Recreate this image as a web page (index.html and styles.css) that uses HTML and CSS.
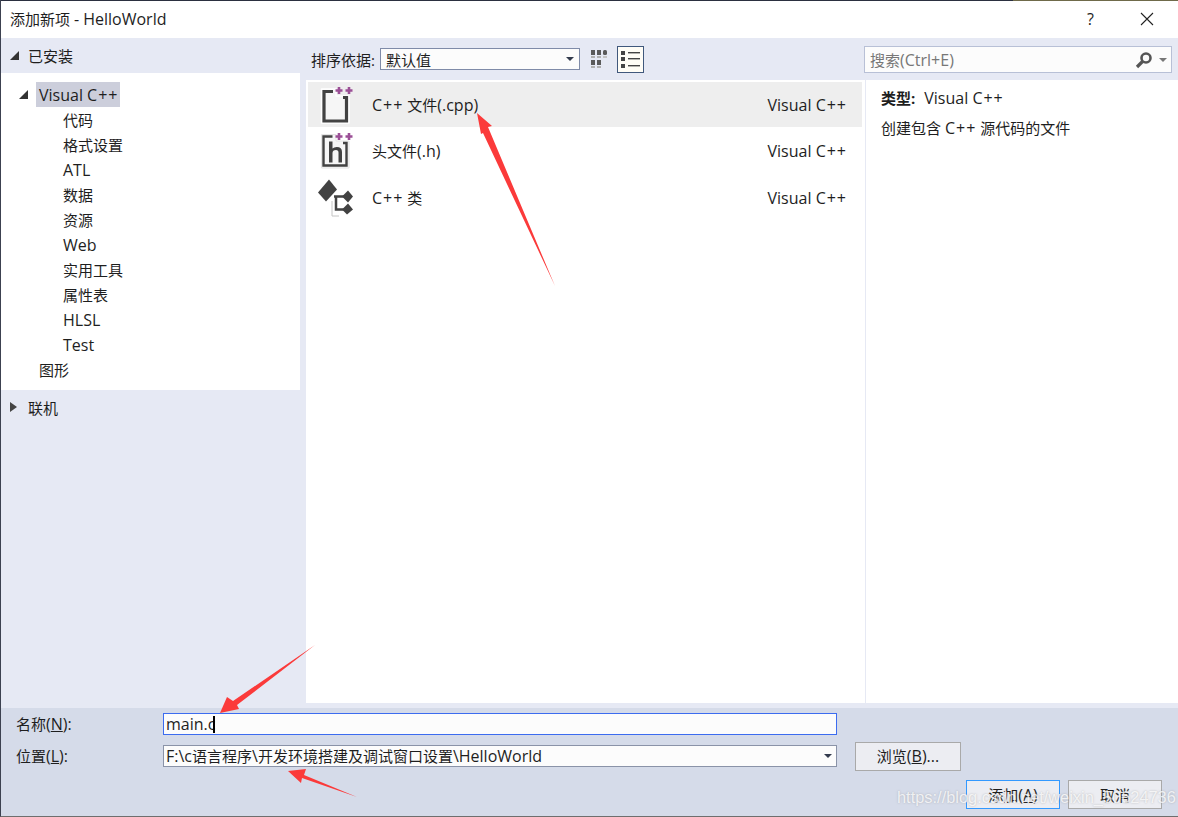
FILE: index.html
```html
<!DOCTYPE html>
<html lang="zh-CN">
<head>
    <meta charset="UTF-8">
    <title>添加新项 - HelloWorld</title>
    <link rel="stylesheet" href="styles.css">
</head>
<body>
<div class="window">
    <div class="top-edge"></div>

    <header class="titlebar">
        <span class="title">添加新项 <span class="en">- HelloWorld</span></span>
        <span class="help">?</span>
        <svg class="close" width="14" height="14" viewBox="0 0 14 14"><path d="M1 1L13 13M13 1L1 13" stroke="#222" stroke-width="1.1" fill="none"/></svg>
    </header>

    <div class="main">
        <!-- left tree -->
        <aside class="sidebar">
            <div class="group-head"><span class="tri-open"></span>已安装</div>
            <ul class="tree">
                <li class="tree-root"><span class="tri-open small"></span><span class="selected en">Visual <span class="cc">C++</span></span></li>
                <li>代码</li>
                <li>格式设置</li>
                <li class="en">ATL</li>
                <li>数据</li>
                <li>资源</li>
                <li class="en">Web</li>
                <li>实用工具</li>
                <li>属性表</li>
                <li class="en">HLSL</li>
                <li class="en">Test</li>
                <li class="tree-top">图形</li>
            </ul>
            <div class="group-head online"><span class="tri-closed"></span>联机</div>
        </aside>

        <!-- template list -->
        <section class="center">
            <div class="toolbar">
                <span class="sort-label">排序依据:</span>
                <div class="combo sort-combo"><span>默认值</span><span class="arrow-down"></span></div>
                <svg class="view-grid" width="18" height="18" viewBox="0 0 18 18" fill="#5a5a5a">
                    <rect x="1" y="0" width="4" height="5"/><rect x="7" y="0" width="4" height="5"/><rect x="13" y="0" width="4" height="5" rx="1.500"/>
                    <rect x="1" y="6" width="4" height="2" fill="#b0b0b0"/><rect x="7" y="6" width="4" height="2" fill="#b0b0b0"/><rect x="13" y="6" width="4" height="2" fill="#c4c4c4"/>
                    <rect x="1" y="10" width="4" height="5"/><rect x="7" y="10" width="4" height="5"/>
                    <rect x="1" y="16" width="4" height="2" fill="#b0b0b0"/><rect x="7" y="16" width="4" height="2" fill="#b0b0b0"/>
                </svg>
                <div class="view-list">
                    <svg width="19" height="17" viewBox="0 0 19 17" fill="#444">
                        <rect x="0" y="0" width="4" height="4"/><rect x="7" y="1" width="12" height="1.400"/>
                        <rect x="0" y="6" width="4" height="4"/><rect x="7" y="7" width="12" height="1.400"/>
                        <rect x="0" y="13" width="4" height="4"/><rect x="7" y="14" width="12" height="1.400"/>
                    </svg>
                </div>
            </div>
            <div class="list">
                <div class="item active">
                    <svg class="item-icon" width="40" height="40" viewBox="0 0 40 40">
                        <path d="M3.500 4H18V11H31V38H3.500Z" fill="#f6f6f6" stroke="#fff" stroke-width="1.500" stroke-linejoin="round"/>
                        <path d="M15 6.500H6V36H28.500V12.500H25" fill="none" stroke="#424242" stroke-width="3.200"/>
                        <path d="M17.500 5.500H24.500M21 2V9M27.500 5.500H34.500M31 2V9" stroke="#9b4f96" stroke-width="2.600" fill="none"/>
                    </svg>
                    <span class="item-name"><span class="en cc">C++</span> 文件<span class="en">(.cpp)</span></span>
                    <span class="item-type en">Visual <span class="cc">C++</span></span>
                </div>
                <div class="item">
                    <svg class="item-icon" width="40" height="40" viewBox="0 0 40 40">
                        <path d="M3.500 3.500H18V10H31V37H3.500Z" fill="#f6f6f6" stroke="#e4e4e4" stroke-width="1" stroke-linejoin="round"/>
                        <path d="M14.500 5.500H5.500V34.500H28.500V12H25" fill="none" stroke="#424242" stroke-width="2.400"/>
                        <path d="M11 10.500H14.500V17.500Q16 16 18.800 16Q24 16 24 21V31.500H20.500V21.500Q20.500 19 18 19Q14.500 19 14.500 22V31.500H11Z" fill="#424242"/>
                        <path d="M17.500 5.500H24.500M21 2V9M27.500 5.500H34.500M31 2V9" stroke="#9b4f96" stroke-width="2.600" fill="none"/>
                    </svg>
                    <span class="item-name">头文件<span class="en">(.h)</span></span>
                    <span class="item-type en">Visual <span class="cc">C++</span></span>
                </div>
                <div class="item">
                    <svg class="item-icon" width="40" height="40" viewBox="0 0 40 40" fill="#424242">
                        <path d="M14 23V38H21" fill="none" stroke="#c4c4c4" stroke-width="1"/>
                        <path d="M0 14.500L11 1.500L19 11.500L8 23.500Z"/>
                        <path d="M16 18.500H26M18 18.500V31.500H26" fill="none" stroke="#424242" stroke-width="2.500"/>
                        <path d="M24 18.500L30 12.500L35 18.500L30 24.500Z"/>
                        <path d="M24 31.500L30 25.500L35 31.500L29 36.500Z"/>
                    </svg>
                    <span class="item-name"><span class="en cc">C++</span> 类</span>
                    <span class="item-type en">Visual <span class="cc">C++</span></span>
                </div>
            </div>
        </section>

        <!-- search + details -->
        <section class="details">
            <div class="search-row">
                <div class="search">
                    <span class="search-hint">搜索<span class="en">(Ctrl+E)</span></span>
                    <svg class="search-icon" width="18" height="18" viewBox="0 0 18 18">
                        <circle cx="11" cy="7" r="4.500" fill="none" stroke="#555" stroke-width="2.600"/>
                        <path d="M7.500 10.500L2 16" stroke="#555" stroke-width="3.200"/>
                    </svg>
                    <span class="arrow-down grey"></span>
                </div>
            </div>
            <div class="info">
                <p class="info-type"><b>类型:</b><span class="en">Visual <span class="cc">C++</span></span></p>
                <p>创建包含 <span class="en cc">C++</span> 源代码的文件</p>
            </div>
        </section>
    </div>

    <footer class="footer">
        <div class="form-row">
            <label class="form-label">名称<span class="en">(<u>N</u>):</span></label>
            <div class="field focused"><span class="en">main.c</span><i class="caret"></i></div>
        </div>
        <div class="form-row">
            <label class="form-label">位置<span class="en">(<u>L</u>):</span></label>
            <div class="field combo-field"><span><span class="en">F:\c</span>语言程序<span class="en">\</span>开发环境搭建及调试窗口设置<span class="en">\HelloWorld</span></span><span class="arrow-down"></span></div>
            <button class="btn browse">浏览<span class="en">(<u>B</u>)...</span></button>
        </div>
        <div class="actions">
            <button class="btn primary">添加<span class="en">(<u>A</u>)</span></button>
            <button class="btn">取消</button>
        </div>
    </footer>

    <span class="watermark">https://blog.csdn.net/weixin_50624736</span>

    <!-- red annotation arrows drawn over the screenshot -->
    <svg class="marks" width="1178" height="817" viewBox="0 0 1178 817" fill="#fb3a3a">
        <polygon points="477,113 492,126 488,127 555,286 483,133 481,134"/>
        <polygon points="220,713 227,697 233,701 315,645 237,705 239,709"/>
        <polygon points="288,771 306,769 304,775 357,797 302,778 301,783"/>
    </svg>
</div>
</body>
</html>
```

FILE: styles.css
```css
* {
    box-sizing: border-box;
}
html, body {
    margin: 0;
    padding: 0;
    background-color: #ffffff;
}
body {
    font-family: "Open Sans", "Noto Sans CJK SC", sans-serif;
    font-size: 15px;
    color: #1e1e1e;
}
ul, p {
    margin: 0;
    padding: 0;
    list-style: none;
}
/* Latin runs are a bit larger than the CJK ones */
.en {
    font-size: 16px;
}
.cc {
    letter-spacing: 1px;
}
.window {
    position: relative;
    width: 1178px;
    height: 817px;
    display: flex;
    flex-direction: column;
    overflow: hidden;
    border-left: 1px solid #3c4150;
    border-bottom: 1px solid #6e6e6e;
}
.top-edge {
    height: 1px;
    flex: none;
    background: linear-gradient(to right, #2b3040 1012px, #6f6a4a 1012px);
}

/* Title bar */
.titlebar {
    height: 37px;
    flex: none;
    display: flex;
    align-items: center;
    padding-left: 9px;
    padding-bottom: 2px;
    background-color: #ffffff;
}
.title {
    flex: 1;
}
.help {
    width: 14px;
    margin-right: 39px;
    font-size: 16px;
}
.close {
    margin-right: 24px;
}

/* Main area */
.main {
    flex: 1;
    display: flex;
    background-color: #e6e9f4;
}
.sidebar {
    width: 299px;
    flex: none;
}
.group-head {
    height: 35px;
    display: flex;
    align-items: center;
    padding-left: 9px;
}
.group-head.online {
    height: 34px;
}
.tri-open {
    width: 0;
    height: 0;
    margin-right: 9px;
    border-left: 9px solid transparent;
    border-bottom: 9px solid #333333;
}
.tri-closed {
    width: 0;
    height: 0;
    margin-right: 11px;
    border-left: 7px solid #444444;
    border-top: 5px solid transparent;
    border-bottom: 5px solid transparent;
}
.tree {
    height: 317px;
    padding-top: 9px;
    padding-left: 62px;
    background-color: #ffffff;
}
.tree li {
    height: 25px;
    line-height: 27px;
}
.tree-root {
    display: flex;
    align-items: center;
    margin-left: -44px;
}
.tree-root .tri-open {
    margin-right: 8px;
}
.selected {
    height: 25px;
    padding: 0 2px 0 3px;
    background-color: #cccedb;
}
.tree li.tree-top {
    margin-left: -24px;
}

/* Center list */
.center {
    width: 559px;
    flex: none;
    margin-left: 6px;
    display: flex;
    flex-direction: column;
    margin-bottom: 5px;
}
.toolbar {
    height: 42px;
    flex: none;
    display: flex;
    align-items: center;
    padding-left: 5px;
}
.sort-label {
    width: 69px;
}
.combo {
    height: 22px;
    display: flex;
    align-items: center;
    justify-content: space-between;
    background-color: #fcfcfc;
    border: 1px solid #7f8ba8;
    padding: 0 5px;
}
.sort-combo {
    width: 200px;
}
.arrow-down {
    width: 0;
    height: 0;
    border-left: 4px solid transparent;
    border-right: 4px solid transparent;
    border-top: 4px solid #333b4d;
}
.arrow-down.grey {
    border-top-color: #777777;
}
.view-grid {
    margin-left: 10px;
}
.view-list {
    width: 27px;
    height: 27px;
    margin-left: 9px;
    display: flex;
    align-items: center;
    justify-content: center;
    background-color: #fffdf6;
    border: 1px solid #40587c;
}
.list {
    flex: 1;
    padding-top: 2px;
    background-color: #ffffff;
}
.item {
    height: 47px;
    margin: 0 3px 0 2px;
    display: flex;
    align-items: center;
    padding-left: 10px;
}
.item:first-child {
    height: 45px;
}
.item.active {
    background-color: #eeeeee;
}
.item-icon {
    flex: none;
    margin-right: 14px;
}
.item-name {
    flex: 1;
}
.item-type {
    margin-right: 15px;
}

/* Search + details */
.details {
    flex: 1;
    display: flex;
    flex-direction: column;
    margin-left: 1px;
    margin-bottom: 5px;
}
.search-row {
    height: 42px;
    flex: none;
    padding: 8px 6px 0 0;
    margin-left: -2px;
}
.search {
    height: 27px;
    display: flex;
    align-items: center;
    padding: 0 4px 0 5px;
    background-color: #fcfcfc;
    border: 1px solid #b8c0d6;
}
.search-hint {
    flex: 1;
    color: #777777;
}
.search-icon {
    margin-right: 6px;
}
.info {
    flex: 1;
    padding: 6px 15px;
    background-color: #ffffff;
}
.info p {
    height: 30px;
    line-height: 24px;
}
.info-type b {
    margin-right: 9px;
}

/* Footer form */
.footer {
    height: 108px;
    flex: none;
    padding-top: 5px;
    background-color: #d5dbe9;
}
.form-row {
    height: 22px;
    margin-bottom: 10px;
    display: flex;
    align-items: center;
    padding-left: 15px;
}
.form-label {
    width: 147px;
    flex: none;
}
.field {
    width: 674px;
    height: 22px;
    line-height: 20px;
    padding: 0 2px;
    background-color: #fcfcfc;
    border: 1px solid #8a93a8;
}
.field.focused {
    border-color: #3c6cf0;
}
.caret {
    display: inline-block;
    width: 2px;
    height: 17px;
    margin-left: -2px;
    vertical-align: -3px;
    background-color: #000000;
}
.combo-field {
    display: flex;
    align-items: center;
    justify-content: space-between;
    padding-right: 4px;
}
.btn {
    width: 94px;
    height: 29px;
    padding: 0;
    font-family: inherit;
    font-size: 15px;
    color: #1e1e1e;
    background-color: #ecedf2;
    border: 1px solid #a9a9a9;
}
.browse {
    width: 106px;
    margin-left: 18px;
}
.actions {
    display: flex;
    justify-content: flex-end;
    gap: 8px;
    padding-right: 16px;
    margin-top: 13px;
}
.btn.primary {
    border-color: #3399ff;
}

/* Overlays */
.watermark {
    position: absolute;
    left: 896px;
    top: 788px;
    font-family: "Liberation Sans", sans-serif;
    font-size: 16.400px;
    color: rgba(255, 255, 255, 0.78);
    text-shadow: 0 0 2px rgba(130, 130, 130, 0.5);
    white-space: nowrap;
}
.marks {
    position: absolute;
    left: -1px;
    top: 0;
    pointer-events: none;
}
```
